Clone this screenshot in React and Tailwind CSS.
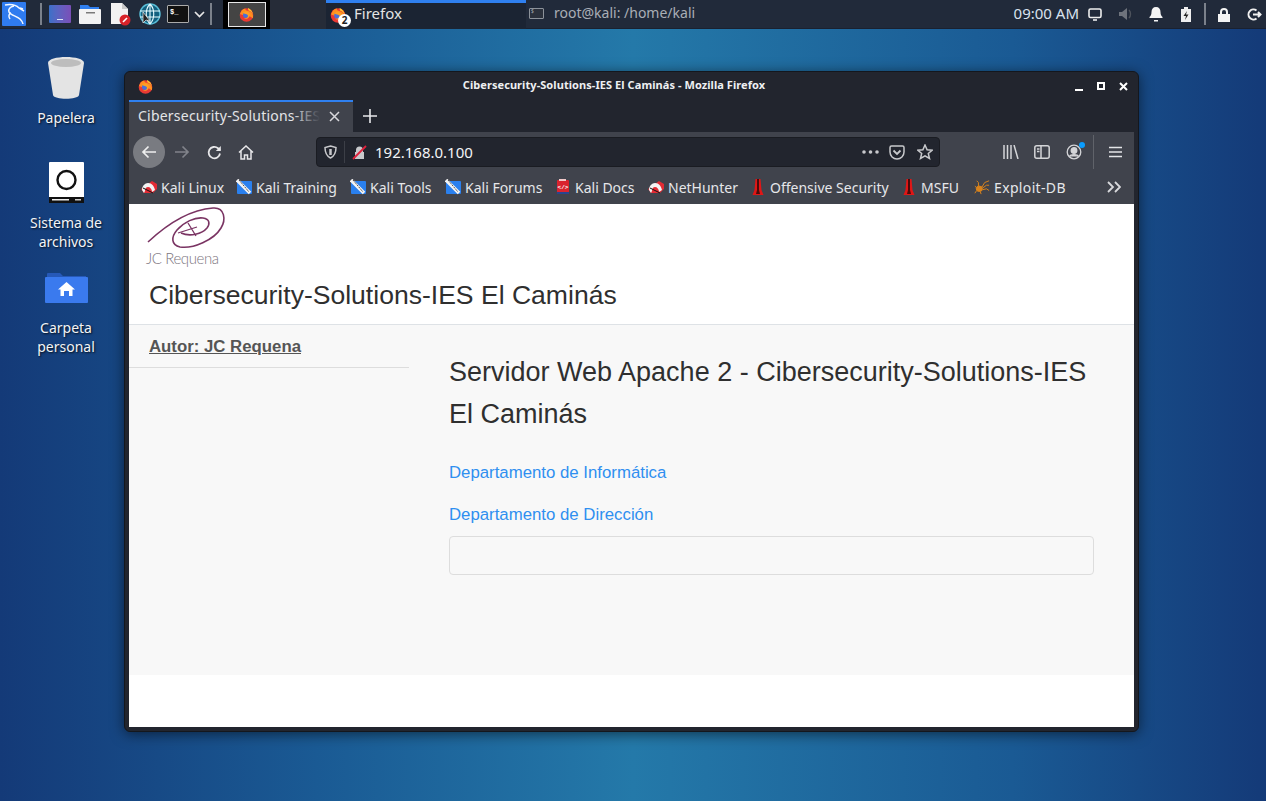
import React from "react";

const chrome = { fontFamily: '"Noto Sans", "Open Sans", sans-serif' };
const web = { fontFamily: '"Liberation Sans", Arial, sans-serif' };

function Firefox({ size = 16 }) {
  return (
    <svg width={size} height={size} viewBox="0 0 32 32">
      <circle cx="16" cy="17" r="14.500" fill="#ea3a34" />
      <path d="M5 9c2-4 6-6 9-6-1 3 1 4 4 5 5 1 11 4 12 11 0 2 0 4-1 5-4-5-14-8-21-7L2 15z" fill="#ff8f1f" />
      <path d="M19 2c6 2 10 8 11 14-2-4-5-7-10-9z" fill="#ffc62e" />
      <circle cx="15" cy="17" r="6.500" fill="#4a6fd8" />
      <path d="M8 13c4-5 11-4 14 0 2 4 1 9-3 11-3 2-7 1-9-1 4 1 8 0 9-3 1-3-2-5-5-5z" fill="#ff9f24" />
    </svg>
  );
}

function KaliDragon({ size = 24 }) {
  return (
    <svg width={size} height={size} viewBox="0 0 24 24" fill="none">
      <rect width="24" height="24" rx="1" fill="#2f7bef" />
      <path d="M3 3c6-1 11 0 14 3l5 3M18 6l3 1M12 4C8 5 6 7 7 10c1 3 8 4 11 7 2 2 3 4 3 5M9 11c-2 1-3 3-1 6" stroke="#f4f8ff" strokeWidth="1.500" />
    </svg>
  );
}

function KaliDocIcon() {
  return (
    <svg width="16" height="16" viewBox="0 0 16 16">
      <rect x="2" y="1" width="12" height="14" rx="1" fill="#d9232e" />
      <rect x="2" y="13" width="12" height="2" fill="#28458f" />
      <rect x="4" y="0" width="7" height="2" fill="#f2c9c9" />
      <text x="8" y="9.500" textAnchor="middle" fontSize="6" fontWeight="700" fill="#fff" fontFamily="Liberation Mono, monospace">&lt;/&gt;</text>
    </svg>
  );
}

function RedMagnet() {
  return (
    <svg width="16" height="16" viewBox="0 0 16 16">
      <path d="M0 10 11 2l5 3v5l-4 4H3z" fill="#e22b34" />
      <path d="M1 11c0-4 3-7 6-7 4 0 6 3 7 7l-3 2c0-3-2-5-4-5s-3 2-3 4l-1 2z" fill="#f3f3f3" />
      <path d="M2 9 12 14" stroke="#111" strokeWidth="1" />
    </svg>
  );
}

function BlueDragon() {
  return (
    <svg width="16" height="16" viewBox="0 0 16 16">
      <rect x="1" y="2" width="15" height="13" rx="1" fill="#2a80ee" />
      <path d="M1 1 14 14" stroke="#f4f4f4" strokeWidth="3.500" />
      <path d="M3 1l10 12" stroke="#222" strokeWidth="0.800" strokeDasharray="2 1" />
    </svg>
  );
}

function Thermo() {
  return (
    <svg width="16" height="17" viewBox="0 0 16 17">
      <path d="M5.500 0h5l1 11 2 5h-11l2-5z" fill="#e01616" />
      <path d="M7 0h2v11l1 4H6l1-4z" fill="#4a0b0b" />
    </svg>
  );
}

function Spider() {
  return (
    <svg width="18" height="16" viewBox="0 0 18 16" fill="none" stroke="#d9831c" strokeWidth="1.100">
      <ellipse cx="6" cy="10" rx="3.500" ry="3" fill="#d9831c" />
      <path d="M9 8 12 3l5-2M10 9l4-3 3 0M10 11l4-1 3 2M5 7 5 3 3 1M3 9 1 7M3 12l-2 3M7 13l1 3" />
    </svg>
  );
}

const marks = [
  ["Kali Linux", <RedMagnet />, "w-[95px]"],
  ["Kali Training", <BlueDragon />, "w-[114px]"],
  ["Kali Tools", <BlueDragon />, "w-[95px]"],
  ["Kali Forums", <BlueDragon />, "w-[110px]"],
  ["Kali Docs", <KaliDocIcon />, "w-[93px]"],
  ["NetHunter", <RedMagnet />, "w-[102px]"],
  ["Offensive Security", <Thermo />, "w-[151px]"],
  ["MSFU", <Thermo />, "w-[73px]"],
  ["Exploit-DB", <Spider />, "w-[104px] tracking-[0.35px]"],
];

function TopBar() {
  return (
    <div className="flex h-[29px] w-full items-center bg-[#212a3a] border-b border-[#1a2130] text-[#d5dce6]" style={chrome}>
      <div className="w-[26px] h-[24px] ml-[2px] flex items-center"><KaliDragon size={24} /></div>
      <div className="ml-[12px] w-[2px] h-[22px] bg-[#7b818b]" />
      <div className="ml-[7px] w-[22px] h-[18px] rounded-[1px] bg-gradient-to-r from-[#3a70c8] to-[#7a4fb8] relative">
        <div className="absolute bottom-[3px] left-[8px] w-[6px] h-[1px] bg-[#dfe5f5]" />
      </div>
      <svg className="ml-[8px]" width="22" height="20" viewBox="0 0 22 20">
        <path d="M1 1h8l2 2h9v4H1z" fill="#2f7ff0" />
        <rect x="0" y="5" width="22" height="15" rx="1" fill="#f2f2f2" />
        <rect x="7" y="8" width="9" height="1.500" fill="#7a7a7a" />
      </svg>
      <svg className="ml-[9px]" width="22" height="24" viewBox="0 0 22 24">
        <path d="M1 1h11l6 6v15H1z" fill="#f2f2f2" />
        <path d="M12 1l6 6h-6z" fill="#c8c8c8" />
        <circle cx="15" cy="18" r="5.500" fill="#d8232a" />
        <path d="M13 20l4-4" stroke="#fff" strokeWidth="1.600" />
      </svg>
      <svg className="ml-[7px]" width="22" height="22" viewBox="0 0 22 22" fill="none">
        <circle cx="11" cy="11" r="10" fill="#12607f" stroke="#58bcd6" strokeWidth="1.500" />
        <path d="M1 8h20M1 14h20M11 1c-5 5-5 15 0 20M11 1c5 5 5 15 0 20M11 1v20" stroke="#e6fbff" strokeWidth="1.100" />
        <path d="M4 9l0 11 3-3 4 1z" fill="#222" stroke="#eee" strokeWidth="0.700" />
      </svg>
      <div className="ml-[6px] w-[22px] h-[18px] rounded-[1px] bg-[#111] border border-[#aaa] text-white text-[7px] font-bold leading-[8px] pl-[2px] pt-[2px]" style={{ fontFamily: '"Liberation Mono", monospace' }}>$_</div>
      <svg className="ml-[5px]" width="11" height="7" viewBox="0 0 11 7" fill="none" stroke="#e6e6e6" strokeWidth="1.700"><path d="M1 1l4.500 4.500L10 1" /></svg>
      <div className="ml-[5px] w-[2px] h-[22px] bg-[#7b818b]" />
      <div className="ml-[11px] w-[47px] h-[29px] bg-black flex items-center justify-center">
        <div className="w-[38px] h-[25px] bg-[#444] border border-[#e8e8e8] flex items-center justify-center"><Firefox size={15} /></div>
      </div>
      <div className="w-[56px] h-[29px] bg-[#262c38]" />
      <div className="w-[200px] h-[29px] bg-[#1b2433] border-t-[3px] border-[#2f80f0] flex items-center relative">
        <div className="ml-[4px] mt-[-2px]"><Firefox size={16} /></div>
        <div className="absolute left-[12px] top-[11px] w-[13px] h-[13px] rounded-full bg-white text-[#222] text-[10px] font-bold leading-[13px] text-center">2</div>
        <span className="ml-[8px] text-[15px] text-[#e4e4e4] mt-[-5px]">Firefox</span>
      </div>
      <div className="flex items-center ml-[3px] text-[14px] text-[#a9aeb6]">
        <div className="w-[15px] h-[11px] border border-[#8c929a] rounded-[1px] bg-[#2b313c] text-[5px] leading-[5px] pl-[1px] mt-[-2px]">$</div>
        <span className="ml-[10px] mt-[-3px]">root@kali: /home/kali</span>
      </div>
      <div className="ml-auto flex items-center">
        <span className="text-[15px] text-[#d9e2ee] mt-[-2px]">09:00 AM</span>
        <svg className="ml-[9px]" width="14" height="13" viewBox="0 0 14 13" fill="none" stroke="#eee" strokeWidth="1.600"><rect x="1" y="1" width="12" height="8.500" rx="1.500" /><path d="M5 12h4" /></svg>
        <svg className="ml-[16px]" width="16" height="14" viewBox="0 0 16 14"><path d="M1 5h3l5-4v12L4 9H1z" fill="#6e737c" /><path d="M11 3c2 2 2 6 0 8" stroke="#4e535c" strokeWidth="1.400" fill="none" /></svg>
        <svg className="ml-[15px]" width="14" height="16" viewBox="0 0 14 16"><path d="M7 1c3 0 4.500 2 4.500 5 0 3 1 4 2 5v1H.5v-1c1-1 2-2 2-5s1.500-5 4.500-5zM5 14h4v1.500H5z" fill="#f4f4f4" /></svg>
        <svg className="ml-[17px]" width="12" height="15" viewBox="0 0 12 15"><path d="M1 2h3V0h4v2h3v13H1z" fill="#efefef" /><path d="M7 4 3.500 9H6l-1 4 3.500-5.500H6z" fill="#222" /></svg>
        <div className="ml-[12px] w-[2px] h-[22px] bg-[#7b818b]" />
        <svg className="ml-[11px]" width="14" height="15" viewBox="0 0 14 15"><path d="M3 7V5a4 4 0 0 1 8 0v2h2v8H1V7zm2 0h4V5a2 2 0 0 0-4 0z" fill="#f4f4f4" /></svg>
        <svg className="ml-[16px] mr-[4px]" width="15" height="13" viewBox="0 0 15 13" fill="none" stroke="#f0f0f0" strokeWidth="2"><path d="M9.500 2.500A5 5 0 1 0 9.500 10.500M6 6.500h7.500M11 4l2.500 2.500L11 9" /></svg>
      </div>
    </div>
  );
}

function DesktopIcon({ top, label, icon, h }) {
  return (
    <div className="absolute left-[16px] w-[100px] flex flex-col items-center" style={{ top }}>
      <div className={`${h} flex items-end justify-center`}>{icon}</div>
      <div className="mt-[9px] text-center text-[14px] leading-[19px] text-[#f2f4f7] [text-shadow:1px_1px_2px_rgba(0,0,0,0.8)]" style={chrome}>{label}</div>
    </div>
  );
}

function Window() {
  return (
    <div className="absolute left-[124px] top-[71px] w-[1015px] h-[661px] rounded-[6px] bg-[#22252e] border border-[#14171d] shadow-[0_2px_14px_rgba(0,0,0,0.55)] flex flex-col px-[4px] pb-[4px]">
      <div className="h-[28px] flex items-center relative shrink-0">
        <div className="ml-[9px]"><Firefox size={15} /></div>
        <div className="absolute left-0 right-[35px] top-[5px] text-center text-[11px] font-bold text-[#eef0f2] tracking-[0.07px]" style={chrome}>Cibersecurity-Solutions-IES El Caminás - Mozilla Firefox</div>
        <div className="ml-auto mr-[6px] flex items-center gap-[14px] relative">
          <div className="w-[8px] h-[2px] bg-white mt-[7px]" />
          <div className="w-[8px] h-[8px] border-2 border-white" />
          <svg width="9" height="9" viewBox="0 0 9 9" stroke="#fff" strokeWidth="2"><path d="M1 1l7 7M8 1L1 8" /></svg>
        </div>
      </div>
      <div className="h-[32px] flex shrink-0 items-stretch" style={chrome}>
        <div className="w-[224px] bg-[#40434c] border-t-2 border-[#2f80f0] flex items-center pl-[9px] pb-[3px] text-[14px] text-[#e4e5e8]">
          <span className="w-[182px] overflow-hidden whitespace-nowrap relative tracking-[0.22px]">
            Cibersecurity-Solutions-IES
            <span className="absolute right-0 top-0 bottom-0 w-[28px] bg-gradient-to-r from-[#40434c00] to-[#40434c]" />
          </span>
          <svg className="ml-[9px] mt-[2px]" width="11" height="11" viewBox="0 0 11 11" stroke="#d8d8dc" strokeWidth="1.500"><path d="M1 1l9 9M10 1l-9 9" /></svg>
        </div>
        <svg className="ml-[10px] self-center mt-[-1px]" width="14" height="14" viewBox="0 0 14 14" stroke="#e8e8ea" strokeWidth="1.600"><path d="M7 0v14M0 7h14" /></svg>
      </div>
      <div className="h-[40px] bg-[#40434c] flex items-center shrink-0" style={chrome}>
        <div className="ml-[4px] w-[32px] h-[32px] rounded-full bg-[#797b81] flex items-center justify-center">
          <svg width="16" height="14" viewBox="0 0 16 14" fill="none" stroke="#eee" strokeWidth="1.700"><path d="M15 7H2M7.500 1.500 2 7l5.500 5.500" /></svg>
        </div>
        <svg className="ml-[9px]" width="16" height="14" viewBox="0 0 16 14" fill="none" stroke="#81838a" strokeWidth="1.700"><path d="M1 7h13M8.500 1.500 14 7l-5.500 5.500" /></svg>
        <svg className="ml-[17px]" width="15" height="15" viewBox="0 0 15 15" fill="none" stroke="#e8e8ea" strokeWidth="1.800"><path d="M13 8.500A5.700 5.700 0 1 1 11 3.200L13 5" /><path d="M13.800 1v5h-5z" fill="#e8e8ea" stroke="none" /></svg>
        <svg className="ml-[16px]" width="16" height="15" viewBox="0 0 16 15" fill="none" stroke="#e8e8ea" strokeWidth="1.500"><path d="M1 7.500 8 1l7 6.500M3 6v8h3.500v-4h3v4H13V6" /></svg>
        <div className="ml-[62px] w-[624px] h-[30px] bg-[#22252e] rounded-[4px] border border-[#1a1c22] flex items-center">
          <svg className="ml-[7px]" width="13" height="14" viewBox="0 0 13 14" fill="none" stroke="#c8c9cc" strokeWidth="1.500"><path d="M6.500 1 12 2.500c0 5-1.500 8.500-5.500 10.500C2.500 11 1 7.500 1 2.500z" /><path d="M6.500 4v6" strokeWidth="2.500" /></svg>
          <div className="ml-[7px] w-px h-[22px] bg-[#3c3f47]" />
          <svg className="ml-[7px]" width="15" height="15" viewBox="0 0 15 15"><path d="M4 7V5a3.500 3.500 0 0 1 7 0v2h1v7H3V7z" fill="#c8c9cc" /><path d="M1 14 14 1" stroke="#e0213c" strokeWidth="1.800" /></svg>
          <span className="ml-[8px] text-[15px] text-[#f4f4f6]">192.168.0.100</span>
          <div className="ml-auto flex items-center mr-[6px]">
            <svg width="17" height="4" viewBox="0 0 17 4" fill="#c8c9cc"><circle cx="2" cy="2" r="1.800" /><circle cx="8.500" cy="2" r="1.800" /><circle cx="15" cy="2" r="1.800" /></svg>
            <svg className="ml-[10px]" width="16" height="15" viewBox="0 0 16 15" fill="none" stroke="#c8c9cc" strokeWidth="1.500"><path d="M1 2.500Q1 1 2.500 1h11Q15 1 15 2.500V7a7 7 0 0 1-14 0z" /><path d="M4.500 5.500 8 9l3.500-3.500" strokeWidth="1.800" /></svg>
            <svg className="ml-[12px]" width="16" height="16" viewBox="0 0 16 16" fill="none" stroke="#c8c9cc" strokeWidth="1.500"><path d="M8 1l2.100 4.700 5 .5-3.800 3.300 1.200 5L8 11.800l-4.500 2.700 1.200-5L.9 6.200l5-.5z" /></svg>
          </div>
        </div>
        <svg className="ml-[63px]" width="16" height="14" viewBox="0 0 16 14" fill="none" stroke="#d4d5d8" strokeWidth="1.500"><path d="M1 0v14M4.500 0v14M8 0v14M11 0l4 14" /></svg>
        <svg className="ml-[15px]" width="16" height="14" viewBox="0 0 16 14" fill="none" stroke="#d4d5d8" strokeWidth="1.500"><rect x=".8" y=".8" width="14.400" height="12.400" rx="2" /><path d="M7 1v12M3 4h2.500M3 6.500h2.500" /></svg>
        <div className="ml-[16px] relative w-[16px] h-[16px]">
          <svg width="16" height="16" viewBox="0 0 16 16" fill="none" stroke="#d4d5d8" strokeWidth="1.300"><circle cx="8" cy="8" r="6.800" /><circle cx="8" cy="6.500" r="2.800" fill="#d4d5d8" /><path d="M3.500 12.500c1-2.500 8-2.500 9 0" fill="#d4d5d8" /></svg>
          <div className="absolute right-[-3px] top-[-2px] w-[6px] h-[6px] rounded-full bg-[#0a9dfe]" />
        </div>
        <div className="ml-[11px] w-px h-[34px] bg-[#60636a]" />
        <svg className="ml-[15px]" width="13" height="12" viewBox="0 0 13 12" stroke="#e4e5e8" strokeWidth="1.500"><path d="M0 1.500h13M0 6h13M0 10.500h13" /></svg>
      </div>
      <div className="h-[32px] bg-[#40434c] flex items-center shrink-0 text-[14px] text-[#e6e7ea] pl-[12px] pb-[2px] relative" style={chrome}>
        {marks.map(([name, icon, w]) => (
          <div key={name} className={`${w} flex items-center gap-[4px] shrink-0 whitespace-nowrap`}>
            <span className="w-[16px] flex justify-center shrink-0">{icon}</span>
            <span>{name}</span>
          </div>
        ))}
        <svg className="absolute right-[13px]" width="14" height="12" viewBox="0 0 14 12" fill="none" stroke="#d8d9dc" strokeWidth="1.800"><path d="M1 1l5 5-5 5M8 1l5 5-5 5" /></svg>
      </div>
      <div className="flex-1 bg-white flex flex-col min-h-0" style={web}>
        <div className="h-[121px] border-b border-[#dee2e6] shrink-0 px-[20px] flex flex-col">
          <svg className="mt-[3px] ml-[-2px] overflow-visible" width="82" height="62" viewBox="0 0 82 62" fill="none">
            <g stroke="#7a3463" strokeWidth="1.600">
              <path d="M1 35C16 21 39 3 66 1C78 0 79 13 74 21C67 33 46 42 33 40C24 38 24 30 30 23C37 15 48 10 56 11C63 12 63 17 60 21C55 27 43 30 34 26" />
              <path d="M31 26 50 20M41 16 49 29" strokeWidth="1.300" />
            </g>
            <text x="-1" y="57" fontSize="15" fill="#7d7680" fontFamily="Lato, sans-serif" fontWeight="300" textLength="73">JC Requena</text>
          </svg>
          <div className="mt-[9px] text-[26.55px] leading-[34px] text-[#2f2f2f]">Cibersecurity-Solutions-IES El Caminás</div>
        </div>
        <div className="h-[350px] bg-[#f8f8f8] flex shrink-0">
          <div className="w-[280px] shrink-0">
            <div className="h-[43px] border-b border-[#dddddd] px-[20px] pt-[11px] text-[16.8px] leading-[22px] font-bold underline text-[#555]">Autor: JC Requena</div>
          </div>
          <div className="px-[40px] pt-[27px] flex-1">
            <div className="text-[27px] leading-[41.5px] text-[#2f2f2f]">Servidor Web Apache 2 - Cibersecurity-Solutions-IES El Caminás</div>
            <div className="mt-[25px] text-[16.8px] leading-[26px] text-[#2f8ff0]">Departamento de Informática</div>
            <div className="mt-[16px] text-[16.8px] leading-[26px] text-[#2f8ff0]">Departamento de Dirección</div>
            <div className="mt-[8px] h-[39px] rounded-[4px] border border-[#dddddd] bg-[#f8f8f8]" />
          </div>
        </div>
      </div>
    </div>
  );
}

export default function App() {
  return (
    <div className="relative w-[1266px] h-[801px] overflow-hidden bg-[linear-gradient(90deg,#143a78_0%,#1a5a94_25%,#2479a9_50%,#1a5a94_80%,#143a78_100%)]">
      <TopBar />
      <DesktopIcon top={50} h="h-[49px]" label="Papelera" icon={
        <svg width="36" height="42" viewBox="0 0 36 42"><path d="M0 6c0-8 36-8 36 0l-5 32c-1 5-25 5-26 0z" fill="#e4e4e4" /><ellipse cx="18" cy="6" rx="15" ry="4" fill="#bdbdbd" /></svg>
      } />
      <DesktopIcon top={155} h="h-[49px] pb-[1px]" label={<>Sistema de<br />archivos</>} icon={
        <svg width="35" height="41" viewBox="0 0 35 41"><rect width="35" height="41" rx="1" fill="#fff" /><circle cx="17.500" cy="18" r="9" fill="none" stroke="#111" strokeWidth="2.400" /><rect y="35" width="35" height="6" fill="#111" /><rect x="3" y="37" width="17" height="1.500" fill="#eee" /><rect x="26" y="37" width="6" height="1.500" fill="#ccc" /></svg>
      } />
      <DesktopIcon top={256} h="h-[53px] pb-[6px] pl-[1px]" label={<>Carpeta<br />personal</>} icon={
        <svg width="43" height="30" viewBox="0 0 43 30"><path d="M2 1a1 1 0 0 1 1-1h12l3 3h23v5H2z" fill="#2659b8" /><rect y="4" width="43" height="26" rx="1" fill="#3a7aee" /><path d="M21.500 9 30 16.500h-2.500V23H24v-5h-5v5h-3.500v-6.500H13z" fill="#fff" /></svg>
      } />
      <Window />
    </div>
  );
}
